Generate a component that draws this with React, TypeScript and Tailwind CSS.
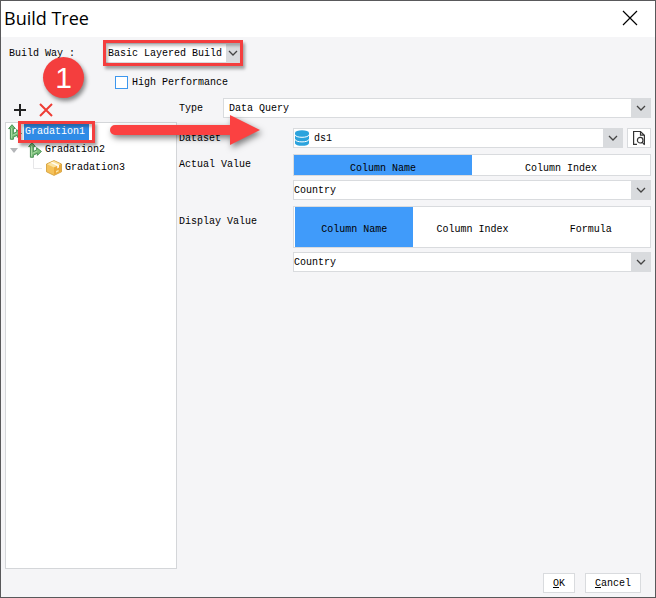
import { useState } from 'react';
import type { ReactNode } from 'react';
import clsx from 'clsx';

function Chevron() {
  return (
    <svg viewBox="0 0 10 6" className="h-[6px] w-[10px]" fill="none" stroke="#444" strokeWidth="1.3" aria-hidden="true">
      <path d="M1 1 L5 5 L9 1" />
    </svg>
  );
}

type SelectBoxProps = {
  id: string;
  options: string[];
  icon?: ReactNode;
  compact?: boolean;
  className?: string;
  selectClassName?: string;
};

function SelectBox({ id, options, icon, compact, className, selectClassName = 'pl-0' }: SelectBoxProps) {
  return (
    <div className={clsx('relative flex h-5 min-w-0 items-stretch border border-[#d9dbde] bg-white', className)}>
      {icon && <span className="flex shrink-0 items-center">{icon}</span>}
      <select
        id={id}
        className={clsx(
          'min-w-0 flex-1 appearance-none bg-transparent pt-[2px] outline-none',
          compact ? 'pr-3' : 'pr-5',
          selectClassName,
        )}
      >
        {options.map((o) => (
          <option key={o}>{o}</option>
        ))}
      </select>
      <span
        className={clsx(
          'pointer-events-none absolute inset-y-0 right-0 flex items-center justify-center bg-[#d9dbde]',
          compact ? 'w-[14px]' : 'w-[19px]',
        )}
      >
        <Chevron />
      </span>
    </div>
  );
}

type SegmentsProps = { label: string; options: string[]; tall?: boolean };

function Segments({ label, options, tall }: SegmentsProps) {
  const [active, setActive] = useState(options[0]);
  return (
    <div
      role="group"
      aria-label={label}
      className={clsx('flex border border-[#d9dbde] bg-white', tall ? 'h-[42px] pl-px' : 'h-[22px]')}
    >
      {options.map((o) => (
        <button
          key={o}
          type="button"
          aria-pressed={active === o}
          onClick={() => setActive(o)}
          className={clsx('flex-1 pt-[6px]', active === o ? 'bg-[#409bfa]' : 'bg-white')}
        >
          {o}
        </button>
      ))}
    </div>
  );
}

function BranchIcon() {
  return (
    <svg viewBox="0 0 14 16" className="h-4 w-[14px] shrink-0" aria-hidden="true">
      <path
        d="M4 0.7 L7.4 4.6 H5.4 V9.6 L8.6 7.8 V5.6 L13.4 9.4 L9.4 13.4 V11.2 L5.4 13.2 V15.3 H2.4 V4.6 H0.6 Z"
        fill="#79bd78"
        stroke="#3f8a4c"
        strokeWidth="0.9"
        strokeLinejoin="round"
      />
      <path d="M3.5 4 V14.4 M4.5 11.4 L9.4 9" fill="none" stroke="#b5e0ac" strokeWidth="0.8" />
    </svg>
  );
}

function BoxIcon() {
  return (
    <svg viewBox="0 0 16 16" className="size-4 shrink-0" strokeLinejoin="round" aria-hidden="true">
      <path d="M8 0.6 L15.5 4 V11.8 L8 15.4 L0.5 11.8 V4 Z" fill="#f5c25a" stroke="#cf9a35" strokeWidth="0.8" />
      <path d="M8 1.1 L14.8 4.2 L8 7.6 L1.2 4.2 Z" fill="#fbe3a0" />
      <path d="M8 7.6 L14.8 4.2 V11.4 L8 14.8 Z" fill="#eaa93a" />
      <path d="M4.6 2.7 L11.2 5.9 V8.4 L13 7.5 V5 L6.4 1.9 Z" fill="#fffaf0" />
      <path d="M10 11 L12.6 9.7 V11.5 L10 12.8 Z" fill="#fbe3a0" />
    </svg>
  );
}

function DatabaseIcon() {
  return (
    <svg viewBox="0 0 16 16" className="size-4" aria-hidden="true">
      <path d="M1 3 V13 C1 16.8 15 16.8 15 13 V3 Z" fill="#2ba3dd" />
      <ellipse cx="8" cy="3" rx="7" ry="2.7" fill="#2ba3dd" />
      <path
        d="M1 4.6 C1 8.2 15 8.2 15 4.6 M1 9.2 C1 12.8 15 12.8 15 9.2"
        fill="none"
        stroke="#fff"
        strokeWidth="1"
      />
    </svg>
  );
}

function PreviewIcon() {
  return (
    <svg viewBox="0 0 14 16" className="h-4 w-[14px]" fill="none" stroke="#333" strokeWidth="1.2" aria-hidden="true">
      <path d="M5 14.4 H1.6 V1.5 H8.5 L12.4 5.2 V14.4 M8.5 1.5 V5.2 H12.4" />
      <circle cx="8.2" cy="10.2" r="2.8" />
      <path d="M10.1 12.2 L12.6 14.8" />
    </svg>
  );
}

function Arrow() {
  return (
    <svg
      viewBox="0 0 151 32"
      className="pointer-events-none absolute left-[108px] top-[114px] h-8 w-[151px] overflow-visible drop-shadow-[2px_3px_3px_rgba(0,0,0,0.5)]"
      aria-hidden="true"
    >
      <path d="M6 10 H121 V0 L151 15 L121 30 V20 H6 A5 5 0 0 1 6 10 Z" fill="#fb4141" />
    </svg>
  );
}

function Highlight({ className }: { className: string }) {
  return (
    <span
      className={clsx(
        'pointer-events-none absolute z-10 border-[3px] border-[#f43e3e] shadow-[2px_3px_3px_rgba(0,0,0,0.35),inset_2px_3px_3px_rgba(0,0,0,0.25)]',
        className,
      )}
    />
  );
}

export default function App() {
  const [selected, setSelected] = useState('Gradation1');

  const node = (name: string) => (
    <button
      type="button"
      onClick={() => setSelected(name)}
      className={clsx('h-4 pl-px pr-1', selected === name && 'bg-[#2f8be6] text-white')}
    >
      {name}
    </button>
  );

  return (
    <div className="relative flex min-h-screen flex-col border border-[#59595b] bg-[#f5f5f7] font-['Liberation_Mono',monospace] text-[10px] leading-4 text-black">
      <header className="flex h-9 items-center justify-between bg-white pb-[2px] pl-[3px] pr-[17px]">
        <h1 className="font-['Open_Sans',sans-serif] text-lg">Build Tree</h1>
        <button type="button" aria-label="Close">
          <svg viewBox="0 0 16 16" className="size-4" stroke="#000" strokeWidth="1.2" aria-hidden="true">
            <path d="M1 1 L15 15 M15 1 L1 15" />
          </svg>
        </button>
      </header>

      <div className="flex h-[61px] flex-col pl-2 pt-[6px]">
        <div className="flex items-center">
          <label htmlFor="build-way" className="w-[96px] pt-[2px]">Build Way :</label>
          <div className="relative">
            <SelectBox id="build-way" options={['Basic Layered Build']} compact className="w-[136px]" selectClassName="pl-[2px]" />
            <Highlight className="-inset-x-[2px] -inset-y-[3px]" />
          </div>
        </div>
        <label className="ml-[106px] mt-[11px] flex items-center gap-1 self-start">
          <input type="checkbox" className="size-[13px] appearance-none border border-[#3d97ee] bg-white checked:bg-[#409bfa]" />
          <span className="pt-px">High Performance</span>
        </label>
      </div>

      <main className="flex flex-1 pl-1 pr-1">
        <section className="flex w-[172px] shrink-0 flex-col" aria-label="Gradations">
          <div className="flex h-6 items-center gap-3 pl-2">
            <button type="button" aria-label="Add">
              <svg viewBox="0 0 14 14" className="size-[14px]" stroke="#222" strokeWidth="2" aria-hidden="true">
                <path d="M7 1 V13 M1 7 H13" />
              </svg>
            </button>
            <button type="button" aria-label="Remove">
              <svg viewBox="0 0 14 14" className="size-[14px]" stroke="#ee3c35" strokeWidth="2" aria-hidden="true">
                <path d="M1 1 L13 13 M13 1 L1 13" />
              </svg>
            </button>
          </div>
          <ul className="flex-1 border border-[#d4d6d9] bg-white">
            <li className="flex h-[18px] items-center gap-[2px] pl-[2px]">
              <BranchIcon />
              <span className="relative flex">
                {node('Gradation1')}
                <Highlight className="-inset-x-[6px] -inset-y-[3px]" />
              </span>
            </li>
            <li className="flex h-[18px] items-center pl-1">
              <svg viewBox="0 0 8 5" className="mr-[10px] h-[5px] w-2" aria-hidden="true">
                <path d="M0 0 H8 L4 5 Z" fill="#b4b6b9" />
              </svg>
              <BranchIcon />
              <span className="ml-[2px] flex">{node('Gradation2')}</span>
            </li>
            <li className="flex h-[18px] items-center pl-[27px]">
              <svg viewBox="0 0 9 18" className="mr-1 h-[18px] w-[9px]" fill="none" stroke="#e6e6e8" aria-hidden="true">
                <path d="M0.5 0 V9.5 H9" />
              </svg>
              <BoxIcon />
              <span className="ml-[2px] flex">{node('Gradation3')}</span>
            </li>
          </ul>
        </section>

        <section className="flex min-w-0 flex-1 flex-col pl-[2px]" aria-label="Gradation settings">
          <div className="flex items-center">
            <label htmlFor="type" className="w-11 shrink-0 pt-[2px]">Type</label>
            <SelectBox id="type" options={['Data Query']} className="flex-1" selectClassName="pl-[5px]" />
          </div>
          <div className="mt-[10px] flex items-center">
            <label htmlFor="dataset" className="w-[114px] shrink-0 pt-[2px]">Dataset</label>
            <SelectBox id="dataset" options={['ds1']} icon={<DatabaseIcon />} className="flex-1" selectClassName="pl-1" />
            <button type="button" aria-label="Preview" className="ml-1 flex h-5 w-6 items-center justify-center border border-[#d9dbde] bg-white">
              <PreviewIcon />
            </button>
          </div>
          <div className="mt-[6px] flex">
            <label htmlFor="actual-value" className="w-[114px] shrink-0 pt-[3px]">Actual Value</label>
            <div className="flex min-w-0 flex-1 flex-col gap-1">
              <Segments label="Actual value source" options={['Column Name', 'Column Index']} />
              <SelectBox id="actual-value" options={['Country']} />
            </div>
          </div>
          <div className="mt-[6px] flex">
            <label htmlFor="display-value" className="w-[114px] shrink-0 pt-2">Display Value</label>
            <div className="flex min-w-0 flex-1 flex-col gap-1">
              <Segments label="Display value source" options={['Column Name', 'Column Index', 'Formula']} tall />
              <SelectBox id="display-value" options={['Country']} />
            </div>
          </div>
        </section>
      </main>

      <footer className="flex justify-end gap-[10px] pb-1 pr-[14px] pt-1">
        <button type="button" className="h-5 w-8 border border-[#d9dbde] bg-white pt-px"><u>O</u>K</button>
        <button type="button" className="h-5 w-14 border border-[#d9dbde] bg-white pt-px"><u>C</u>ancel</button>
      </footer>

      <Arrow />
      <span className="pointer-events-none absolute left-[42px] top-[56px] z-20 flex size-[41px] items-center justify-center rounded-full bg-[#f43e3e] font-['Liberation_Sans',sans-serif] text-[30px] text-white shadow-[2px_3px_4px_rgba(0,0,0,0.45)]">
        1
      </span>
    </div>
  );
}
